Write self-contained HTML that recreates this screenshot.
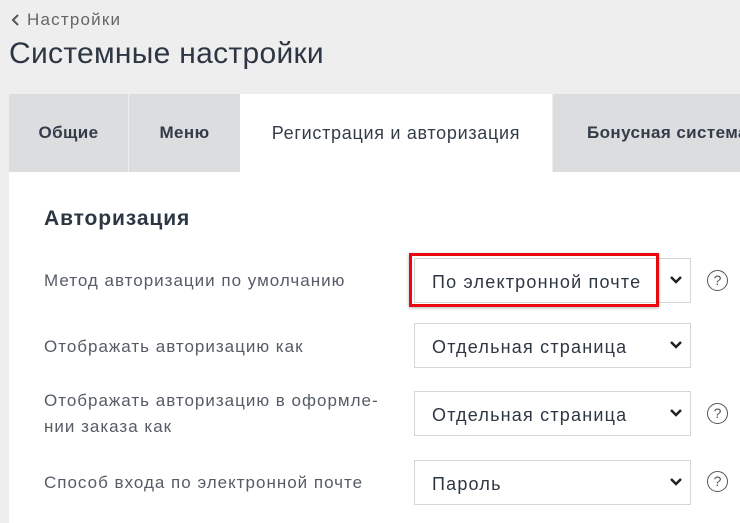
<!DOCTYPE html>
<html><head><meta charset="utf-8"><style>
*{margin:0;padding:0;box-sizing:border-box}
body{width:740px;height:523px;overflow:hidden;background:#eeeeee;font-family:"Liberation Sans","DejaVu Sans",sans-serif;position:relative}
.a{position:absolute}
.back{left:11px;top:10px;font-size:17px;color:#666;letter-spacing:1.2px}
.title{left:9px;top:37px;font-size:30px;color:#2d3744;letter-spacing:0.3px}
.tab{top:94px;height:78px;background:#dcdddf;font-size:17px;font-weight:bold;color:#333c48;display:flex;align-items:center;justify-content:center;white-space:nowrap;letter-spacing:0.4px}
.content{left:9px;top:172px;width:731px;height:351px;background:#fff}
.h{left:44px;top:207px;font-size:21px;font-weight:bold;color:#2d3744;letter-spacing:0.9px}
.lbl{left:44px;font-size:17px;color:#555c66;line-height:26px;letter-spacing:1px}
.sel{left:414px;width:277px;height:45px;border:1px solid #d5d5d5;background:#fff;font-size:18px;color:#2d3744;padding-left:17px;padding-top:3px;display:flex;align-items:center;letter-spacing:1.2px}
.sel svg{position:absolute;right:7px;top:16px}
.q{left:707px;width:21px;height:21px;border:1.5px solid #555;border-radius:50%;font-size:14px;color:#555;text-align:center;line-height:18px}
</style></head><body>
<div class="a back"><svg width="10" height="12" style="margin-right:6px;vertical-align:-1px"><path d="M7 1L2 6L7 11" stroke="#555" stroke-width="2" fill="none"/></svg>Настройки</div>
<div class="a title">Системные настройки</div>
<div class="a tab" style="left:9px;width:119px">Общие</div>
<div class="a tab" style="left:129px;width:111px">Меню</div>
<div class="a tab" style="left:240px;width:312px;background:#fff;font-weight:normal;font-size:18px;letter-spacing:0.7px">Регистрация и авторизация</div>
<div class="a tab" style="left:553px;width:200px;justify-content:flex-start;padding-left:34px">Бонусная система</div>
<div class="a content"></div>
<div class="a h">Авторизация</div>
<div class="a lbl" style="top:268px">Метод авторизации по умолчанию</div>
<div class="a lbl" style="top:334px">Отображать авторизацию как</div>
<div class="a lbl" style="top:388px">Отображать авторизацию в оформле-<br>нии заказа как</div>
<div class="a lbl" style="top:470px">Способ входа по электронной почте</div>
<div class="a sel" style="top:258px">По электронной почте<svg width="14" height="10"><path d="M2 2L7 7L12 2" stroke="#222" stroke-width="2.5" fill="none"/></svg></div>
<div class="a" style="left:409px;top:253px;width:250px;height:54px;border:3px solid #e8090f;box-shadow:0 1px 3px rgba(0,0,0,.3)"></div>
<div class="a sel" style="top:323px">Отдельная страница<svg width="14" height="10"><path d="M2 2L7 7L12 2" stroke="#222" stroke-width="2.5" fill="none"/></svg></div>
<div class="a sel" style="top:391px">Отдельная страница<svg width="14" height="10"><path d="M2 2L7 7L12 2" stroke="#222" stroke-width="2.5" fill="none"/></svg></div>
<div class="a sel" style="top:460px">Пароль<svg width="14" height="10"><path d="M2 2L7 7L12 2" stroke="#222" stroke-width="2.5" fill="none"/></svg></div>
<div class="a q" style="top:270px">?</div>
<div class="a q" style="top:403px">?</div>
<div class="a q" style="top:471px">?</div>
</body></html>
